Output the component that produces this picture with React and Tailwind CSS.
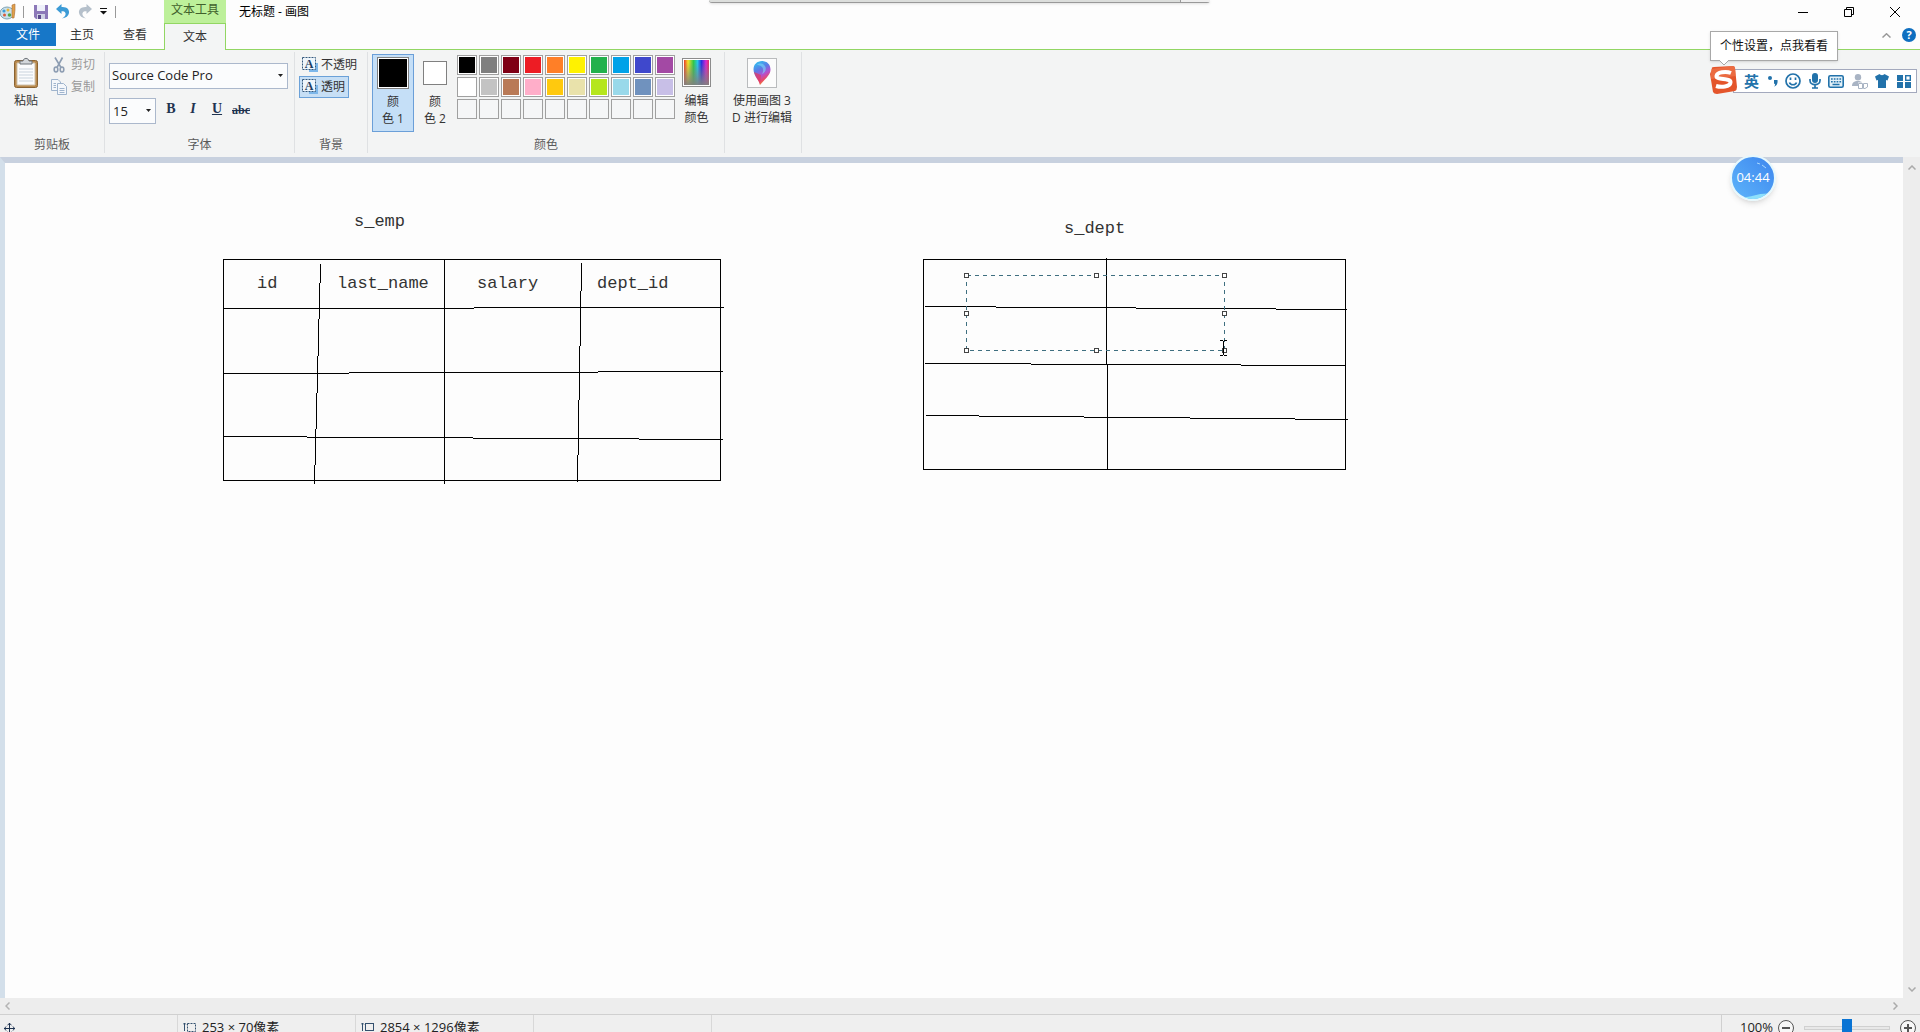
import React from "react";

const PALETTE = [
  ["#000000", "#7f7f7f", "#7f0015", "#ed1c24", "#ff7f27", "#fff200", "#22b14c", "#00a2e8", "#3f48cc", "#a349a4"],
  ["#ffffff", "#c3c3c3", "#b97a57", "#ffaec9", "#ffc90e", "#e9e2ab", "#b5e61d", "#99d9ea", "#7092be", "#c8bfe7"],
  Array(10).fill(""),
];

function Group({ label, className, children }) {
  return (
    <section className={"flex flex-col border-r border-[#dfe1e3] " + className}>
      <div className="flex flex-1 min-h-0">{children}</div>
      <div className="h-4 text-center leading-4 text-[#5a5a5a]">{label}</div>
    </section>
  );
}

function Caret() {
  return (
    <svg className="pointer-events-none absolute right-[5px] top-1/2 -mt-0.5" width="5" height="3">
      <path d="M0 0H5L2.5 3Z" fill="#222" />
    </svg>
  );
}

function PaintIcon() {
  return (
    <svg width="16" height="17" viewBox="0 0 16 17">
      <ellipse cx="7" cy="10" rx="7" ry="6" fill="#c9e0ea" stroke="#7fa3b5" />
      <circle cx="4" cy="8" r="1.6" fill="#3c9bd6" />
      <circle cx="8" cy="7" r="1.5" fill="#e8b33a" />
      <circle cx="4.5" cy="12" r="1.5" fill="#d95b3c" />
      <circle cx="9.5" cy="12" r="1.8" fill="#54a548" />
      <path d="M12 2l3-1v6l-1 8h-2V7z" fill="#e2a04a" stroke="#a9713a" strokeWidth=".6" />
    </svg>
  );
}

function SaveIcon() {
  return (
    <svg width="14" height="14" viewBox="0 0 14 14">
      <path d="M0 0H14V14H2L0 12Z" fill="#8c78b8" />
      <rect x="3" y="0" width="8" height="6" fill="#eef0fa" />
      <rect x="3" y="9" width="8" height="5" fill="#cfd2e4" />
      <rect x="4" y="10" width="3" height="4" fill="#5a4a8c" />
    </svg>
  );
}

function UndoIcon({ color, flip }) {
  return (
    <svg width="14" height="15" viewBox="0 0 14 15" className={flip ? "-scale-x-100" : ""}>
      <path d="M0 5L5.5 0V3C11 2.500 13.500 5.500 13 9C12.500 12 10 14 6 14.500C9.500 12.500 10.500 10 9 8.200C8.200 7.200 7 7 5.500 7.200V10Z" fill={color} />
    </svg>
  );
}

function ClipboardIcon() {
  return (
    <svg width="26" height="32" viewBox="0 0 26 32">
      <rect x="1.500" y="3.500" width="23" height="27" rx="2" fill="#b98a4e" stroke="#8a6332" />
      <path d="M4 6H22V28H4Z" fill="#fbfcfd" stroke="#cfc3ae" />
      <path d="M6 12H20M6 15H20M6 18H20M6 21H20M6 24H20" stroke="#c9d3dd" />
      <path d="M7 7V4H10C10.500 .5 15.500 .5 16 4H19V7Z" fill="#d3d7db" stroke="#6f757b" />
    </svg>
  );
}

function ScissorsIcon() {
  return (
    <svg width="12" height="16" viewBox="0 0 12 16" fill="none" stroke="#8d9db2" strokeWidth="1.6">
      <path d="M2 0.500L8 10.500M9.500 .5L4 10.500" />
      <ellipse cx="3" cy="12.500" rx="1.800" ry="2.500" />
      <ellipse cx="9" cy="12.500" rx="1.800" ry="2.500" />
    </svg>
  );
}

function CopyIcon() {
  return (
    <svg width="16" height="16" viewBox="0 0 16 16" fill="#f4f7fb" stroke="#9fb4cd">
      <path d="M.5 .5H7L9.500 3V11.500H.5Z" />
      <path d="M2.500 4.500H5M2.500 6.500H5M2.500 8.500H5" />
      <path d="M6.500 4.500H12.500L15.500 7.500V15.500H6.500Z" />
      <path d="M8.500 9.500H13.500M8.500 11.500H13.500M8.500 13.500H13.500" />
    </svg>
  );
}

function TextBoxIcon() {
  return (
    <svg width="16" height="16" viewBox="0 0 16 16">
      <rect x="7" y="6" width="9" height="9" fill="#7db7ea" />
      <rect x=".5" y=".5" width="13" height="12" fill="#eef5fb" stroke="#34587c" strokeDasharray="2 1" />
      <text x="7" y="11" textAnchor="middle" fontSize="12" fontWeight="bold" fontFamily="Liberation Serif, serif" fill="#1f3d63">A</text>
    </svg>
  );
}

function RainbowIcon() {
  return (
    <svg width="29" height="29" viewBox="0 0 29 29">
      <defs>
        <linearGradient id="hues">
          <stop offset="0" stopColor="#e8382c" />
          <stop offset=".16" stopColor="#f6e02a" />
          <stop offset=".38" stopColor="#2fc84a" />
          <stop offset=".54" stopColor="#25c6e8" />
          <stop offset=".7" stopColor="#2a2ee0" />
          <stop offset=".88" stopColor="#d928d4" />
          <stop offset="1" stopColor="#e0305e" />
        </linearGradient>
        <linearGradient id="fade" x2="0" y2="1">
          <stop offset=".1" stopColor="#808080" stopOpacity="0" />
          <stop offset="1" stopColor="#808080" stopOpacity=".95" />
        </linearGradient>
      </defs>
      <rect x=".5" y=".5" width="28" height="28" fill="#fff" stroke="#8c8c8c" />
      <rect x="2" y="2" width="25" height="25" fill="url(#hues)" />
      <rect x="2" y="2" width="25" height="25" fill="url(#fade)" />
    </svg>
  );
}

function Paint3DIcon() {
  return (
    <svg width="30" height="30" viewBox="0 0 30 30">
      <defs>
        <linearGradient id="drop" x1=".2" y1="0" x2=".6" y2="1">
          <stop offset="0" stopColor="#2fc3f0" />
          <stop offset=".35" stopColor="#5a7be6" />
          <stop offset=".6" stopColor="#b44fd0" />
          <stop offset=".8" stopColor="#e8486a" />
          <stop offset="1" stopColor="#f5a623" />
        </linearGradient>
      </defs>
      <rect x=".5" y=".5" width="29" height="29" fill="#fcfcfc" stroke="#b9bbbd" />
      <path d="M15 3C20 3 23.500 6.500 23.500 11.500C23.500 17 18 21 13 27C13 23 6.500 18 6.500 11.500C6.500 6.500 10 3 15 3Z" fill="url(#drop)" />
      <path d="M10 7C12 5 16 5 18 8C20 11 18 15 15 16C18 11 15 7 10 7Z" fill="#7fe0fa" opacity=".55" />
      <path d="M7 14L14 17L13 27C12 22 8 19 7 14Z" fill="#e23a5c" opacity=".7" />
    </svg>
  );
}

function SogouLogo() {
  return (
    <svg width="29" height="28" viewBox="0 0 29 28">
      <path d="M3 3Q2 1 5 1L24 0Q26 0 26 2L28 21Q28 24 26 25L8 28Q5 28 4 26L1 8Z" fill="#e4552b" />
      <path d="M2 3L24 0L26 2L27 10L2 13Z" fill="#f07a50" opacity=".6" />
      <path d="M22 7C17 5 8 6 7.500 10C7 14.500 22 11.500 21.500 16.500C21 21 12 21.500 7 20" fill="none" stroke="#fff" strokeWidth="4" />
    </svg>
  );
}

function ImeBar() {
  const btn = "flex h-full items-center justify-center";
  return (
    <div className="absolute right-[3px] top-[69px] flex h-6 w-[184px] items-center justify-between border border-[#a3a9bd] bg-white pl-[10px] pr-[5px] text-[#2272aa]">
      <button aria-label="中英文切换" className={btn + " text-[15px] font-bold"}>英</button>
      <button aria-label="标点" className={btn}>
        <svg width="11" height="12" viewBox="0 0 11 12"><circle cx="3" cy="3" r="2" fill="currentColor" /><path d="M7 5h3.500C11 8.500 9.500 11 7 11.500C8.500 10 8.500 9 7 8.500Z" fill="currentColor" /></svg>
      </button>
      <button aria-label="表情" className={btn}>
        <svg width="16" height="16" viewBox="0 0 16 16" fill="none" stroke="currentColor" strokeWidth="1.700"><circle cx="8" cy="8" r="7" /><path d="M5.500 4.500V7M10.500 4.500V7M4.500 9.500C5.500 12.500 10.500 12.500 11.500 9.500" /></svg>
      </button>
      <button aria-label="语音" className={btn}>
        <svg width="12" height="16" viewBox="0 0 12 16"><rect x="3" y="0" width="6" height="10" rx="3" fill="currentColor" /><path d="M1 6V7.500C1 13 11 13 11 7.500V6M6 12V15M3 15H9" fill="none" stroke="currentColor" strokeWidth="1.700" /></svg>
      </button>
      <button aria-label="软键盘" className={btn}>
        <svg width="16" height="13" viewBox="0 0 16 13"><rect x=".8" y=".8" width="14.400" height="11.400" rx="1.500" fill="#e4f1f8" stroke="currentColor" strokeWidth="1.600" /><path d="M3 4H13.500M3 6.700H13.500" stroke="currentColor" strokeWidth="1.600" strokeDasharray="1.700 1.100" /><path d="M4.500 9.500H11.500" stroke="currentColor" strokeWidth="1.500" /></svg>
      </button>
      <button aria-label="账户" className={btn}>
        <svg width="16" height="15" viewBox="0 0 16 15" fill="#a9b4c4"><circle cx="6" cy="3.300" r="3.200" /><path d="M0 12C0 8.500 2 7 6 7C8 7 9.500 7.500 10 8.500H6V12Z" /><path d="M6.500 9.500H10.500V14.500H6.500ZM11.500 9.500H15.500V13L13 14.500H11.500Z" fill="#fff" stroke="#a9b4c4" /></svg>
      </button>
      <button aria-label="皮肤" className={btn}>
        <svg width="14" height="14" viewBox="0 0 14 14"><path d="M4.500 0C5.500 1.500 8.500 1.500 9.500 0L14 2.500L12.500 6.500L11 6V14H3V6L1.500 6.500L0 2.500Z" fill="currentColor" /></svg>
      </button>
      <button aria-label="工具箱" className={btn}>
        <svg width="14" height="13" viewBox="0 0 14 13" fill="currentColor"><rect width="6" height="6" /><rect x="8.700" y=".7" width="4.600" height="4.600" fill="#fff" stroke="currentColor" strokeWidth="1.400" /><rect y="7" width="6" height="6" /><rect x="8" y="7" width="6" height="6" /></svg>
      </button>
    </div>
  );
}

function Drawing() {
  const handles = [
    [966, 275], [1096, 275], [1224, 275],
    [966, 313], [1224, 313],
    [966, 350], [1096, 350], [1224, 350],
  ];
  return (
    <svg className="block h-full w-full" role="img" aria-label="画布">
      <g transform="translate(-5 -163)" fill="none" stroke="#000" shapeRendering="crispEdges">
        <rect x="223.500" y="259.500" width="497" height="221" />
        <path d="M320.500 264V283M319.500 283V319M318.500 319V356M317.500 356V393M316.500 393V429M315.500 429V465M314.500 465V484" />
        <path d="M444.500 260V484" />
        <path d="M581.500 263V291M580.500 291V346M579.500 346V400M578.500 400V455M577.500 455V482" />
        <path d="M223 308.500H474M474 307.500H724" />
        <path d="M223 373.500H349M349 372.500H598M598 371.500H723" />
        <path d="M223 436.500H307M307 437.500H473M473 438.500H639M639 439.500H723" />
        <rect x="923.500" y="259.500" width="422" height="210" />
        <path d="M1106.500 258V365M1107.500 365V469" />
        <path d="M925 306.500H996M996 307.500H1136M1136 308.500H1276M1276 309.500H1347" />
        <path d="M925 363.500H1031M1031 364.500H1241M1241 365.500H1345" />
        <path d="M926 415.500H979M979 416.500H1084M1084 417.500H1190M1190 418.500H1295M1295 419.500H1348" />
        <rect x="966.500" y="275.500" width="258" height="75" stroke="#fdfdfd" />
        <rect x="966.500" y="275.500" width="258" height="75" stroke="#3f6f80" strokeDasharray="4 4" />
        {handles.map(([x, y]) => (
          <rect key={x + "-" + y} x={x - 1.5} y={y - 1.5} width="4" height="4" fill="#fff" stroke="#444" />
        ))}
        <path d="M1220 340.500H1223M1224 340.500H1227M1223.500 341V355M1220 355.500H1223M1224 355.500H1227" />
      </g>
      <g transform="translate(-5 -163)" fontFamily="Liberation Mono, monospace" fontSize="17" fill="#333">
        <text x="354" y="226">s_emp</text>
        <text x="257" y="288">id</text>
        <text x="337" y="288">last_name</text>
        <text x="477" y="288">salary</text>
        <text x="597" y="288">dept_id</text>
        <text x="1064" y="233">s_dept</text>
      </g>
    </svg>
  );
}

export default function App() {
  return (
    <div className="relative flex h-screen flex-col overflow-hidden bg-[#fdfdfd] font-['Open_Sans','Noto_Sans_CJK_SC',sans-serif] text-xs text-[#333]">
      <header className="flex h-[23px] items-center">
        <div className="flex w-[164px] items-center">
          <PaintIcon />
          <span className="ml-[7px] h-3 w-px bg-[#999]" />
          <button aria-label="保存" className="ml-[10px]"><SaveIcon /></button>
          <button aria-label="撤消" className="ml-2"><UndoIcon color="#3c9bd6" /></button>
          <button aria-label="重做" className="ml-2"><UndoIcon color="#b5c0cb" flip /></button>
          <button aria-label="自定义快速访问工具栏" className="ml-2">
            <svg width="7" height="7" className="block"><path d="M0 .5H7" stroke="#111" /><path d="M0 3H7L3.500 6.500Z" fill="#111" /></svg>
          </button>
          <span className="ml-2 h-3 w-px bg-[#999]" />
        </div>
        <div className="h-full w-[62px] bg-[#bdf09a] text-center leading-5 text-[#41602c]">文本工具</div>
        <h1 className="ml-[13px] flex-1 text-black">无标题 - 画图</h1>
        <div className="mr-5 flex items-center gap-9">
          <button aria-label="最小化"><svg width="10" height="10"><path d="M0 5.500H10" stroke="#000" /></svg></button>
          <button aria-label="还原"><svg width="10" height="10" fill="none" stroke="#000"><path d="M.5 2.500H7.500V9.500H.5ZM2.500 2.500V.5H9.500V7.500H7.500" /></svg></button>
          <button aria-label="关闭"><svg width="10" height="10" stroke="#000"><path d="M0 0L10 10M10 0L0 10" /></svg></button>
        </div>
      </header>

      <nav className="flex h-[27px]">
        <div className="flex w-[164px] border-b border-[#92d663]">
          <button className="h-[23px] w-14 bg-[#1777c8] text-white">文件</button>
          <button className="h-6 w-[52px]">主页</button>
          <button className="h-6 w-[54px]">查看</button>
        </div>
        <button className="w-[62px] border-x border-t border-[#92d663] bg-[#f3f5f5]">文本</button>
        <div className="flex flex-1 items-center justify-end gap-[11px] border-b border-[#92d663] pr-1 pb-0.5">
          <button aria-label="折叠功能区"><svg width="9" height="5" className="block" fill="none" stroke="#999" strokeWidth="1.500"><path d="M.5 4.500L4.500 .8L8.500 4.500" /></svg></button>
          <button aria-label="帮助" className="h-[14px] w-[14px] rounded-full bg-[#0f6fc0] text-[11px] font-bold leading-[14px] text-white">?</button>
        </div>
      </nav>

      <div className="flex h-[107px] bg-[#f3f4f4] pt-0.5 pb-1">
        <Group label="剪贴板" className="w-[105px]">
          <button className="mt-[5px] ml-[13px] flex w-[26px] flex-col items-center gap-1 self-start whitespace-nowrap">
            <ClipboardIcon />
            <span>粘贴</span>
          </button>
          <div className="ml-3 flex flex-col gap-[6px] pt-[5px] text-[#999]">
            <button className="flex h-4 items-center gap-1"><span className="flex w-4 justify-center"><ScissorsIcon /></span>剪切</button>
            <button className="flex h-4 items-center gap-1"><CopyIcon />复制</button>
          </div>
        </Group>
        <Group label="字体" className="w-[190px]">
          <div className="flex flex-1 flex-col gap-[9px] pl-1 pr-[6px] pt-[11px]">
            <div className="relative">
              <select aria-label="字体系列" className="block h-[26px] w-full appearance-none border border-[#abb8cc] bg-[#fbfcfd] px-[2px] text-[13px] text-[#222]"><option>Source Code Pro</option></select>
              <Caret />
            </div>
            <div className="flex items-center font-['Liberation_Serif'] text-sm font-bold text-[#1f3350]">
              <div className="relative mr-2 w-[47px] font-['Open_Sans'] font-normal">
                <select aria-label="字体大小" className="block h-[26px] w-full appearance-none border border-[#abb8cc] bg-[#fbfcfd] px-[3px] text-[13px] text-[#222]"><option>15</option></select>
                <Caret />
              </div>
              <button aria-label="加粗" className="h-[26px] w-[14px] pb-1">B</button>
              <button aria-label="倾斜" className="ml-2 h-[26px] w-[14px] pb-1 italic">I</button>
              <button aria-label="下划线" className="ml-[10px] h-[26px] w-[14px] pb-1 underline">U</button>
              <button aria-label="删除线" className="ml-2 h-[26px] w-[18px] pb-0.5 text-xs line-through">abc</button>
            </div>
          </div>
        </Group>
        <Group label="背景" className="w-[73px]">
          <div className="flex flex-col items-start pl-1 pt-0.5 whitespace-nowrap">
            <button className="flex h-[22px] items-center gap-[3px] px-[3px]"><TextBoxIcon />不透明</button>
            <button className="flex h-[22px] items-center gap-[3px] border border-[#6ba1d8] bg-[#c7dff5] px-0.5 pr-[3px]"><TextBoxIcon />透明</button>
          </div>
        </Group>
        <Group label="颜色" className="w-[357px]">
          <button className="ml-1 mt-0.5 flex h-[78px] w-[42px] flex-col items-center border border-[#6b9fd8] bg-[#c5dff7] pt-0.5 leading-[17px]">
            <span className="mb-1 h-8 w-8 border-2 border-[#808080] bg-black outline -outline-offset-2 outline-white" />
            <span>颜</span><span>色 1</span>
          </button>
          <button className="mt-0.5 flex h-[78px] w-[42px] flex-col items-center pt-[7px] leading-[17px]">
            <span className="mb-2 h-6 w-6 border border-[#808080] bg-white" />
            <span>颜</span><span>色 2</span>
          </button>
          <div className="ml-px mt-[3px] grid grid-cols-10 content-start gap-0.5">
            {PALETTE.flat().map((c, i) => (
              <button
                key={i}
                aria-label={c ? "颜色 " + c : "空颜色"}
                className={"h-5 w-5 border border-[#a0a0a0] " + (c ? "bg-white p-px" : "bg-[#f5f6f7]")}
              >
                {c && <span className="block h-full w-full" style={{ backgroundColor: c }} />}
              </button>
            ))}
          </div>
          <button className="ml-[7px] mt-[6px] flex w-[29px] flex-col items-center self-start leading-[17px]">
            <span className="mb-[5px] block h-[29px]"><RainbowIcon /></span>
            <span>编辑</span><span>颜色</span>
          </button>
        </Group>
        <Group label="" className="w-[77px]">
          <button className="mt-[6px] flex w-[74px] flex-col items-center self-start whitespace-nowrap leading-[17px]">
            <span className="mb-1 block h-[30px]"><Paint3DIcon /></span>
            <span>使用画图 3</span><span>D 进行编辑</span>
          </button>
        </Group>
      </div>

      <main className="flex min-h-0 flex-1 bg-[#ededed]">
        <div className="flex flex-1 flex-col">
          <div className="flex-1 border-l-[5px] border-t-[6px] border-l-[#d3dfea] border-t-[#c8d1df] bg-[#fdfdfd]">
            <Drawing />
          </div>
          <div className="flex h-4 items-center justify-between px-[5px]">
            <svg width="5" height="8" fill="none" stroke="#b4b4b4" strokeWidth="1.500"><path d="M4.500 .5L1 4L4.500 7.500" /></svg>
            <svg width="5" height="8" fill="none" stroke="#aaa" strokeWidth="1.500"><path d="M.5 .5L4 4L.5 7.500" /></svg>
          </div>
        </div>
        <div className="flex w-[17px] flex-col items-center justify-between pb-[22px] pt-2">
          <svg width="8" height="5" fill="none" stroke="#aaa" strokeWidth="1.500"><path d="M.5 4.500L4 1L7.500 4.500" /></svg>
          <svg width="8" height="5" fill="none" stroke="#aaa" strokeWidth="1.500"><path d="M.5 .5L4 4L7.500 .5" /></svg>
        </div>
      </main>

      <footer className="h-[18px] overflow-hidden border-t border-[#d0d0d0] bg-[#efefef] text-[13px] text-[#222]">
        <div className="flex h-[26px]">
          <div className="flex w-[178px] items-center border-r border-[#d8d8d8] pl-1">
            <svg width="11" height="11" fill="none" stroke="#1f3350"><path d="M0 5.500H11M5.500 0V11M3.500 2L5.500 .5L7.500 2M3.500 9L5.500 10.500L7.500 9M2 3.500L.5 5.500L2 7.500M9 3.500L10.500 5.500L9 7.500" /></svg>
          </div>
          <div className="flex w-[178px] items-center gap-[6px] border-r border-[#d8d8d8] pl-[5px]">
            <svg width="13" height="13" fill="none" stroke="#33506e"><path d="M1.500 1V9M0 2.500L1.500 1L3 2.500" /><rect x="4.500" y="1.500" width="8" height="8" strokeDasharray="2 1" /></svg>
            253 × 70像素
          </div>
          <div className="flex w-[178px] items-center gap-[6px] border-r border-[#d8d8d8] pl-[5px]">
            <svg width="13" height="13" fill="none" stroke="#33506e"><path d="M1.500 1V9M0 2.500L1.500 1L3 2.500" /><rect x="4.500" y="1.500" width="8" height="7" /></svg>
            2854 × 1296像素
          </div>
          <div className="w-[178px] border-r border-[#d8d8d8]" />
          <div className="flex-1" />
          <div className="flex w-[199px] items-center border-l border-[#d0d0d0] pl-[18px]">
            <label htmlFor="zoom" className="w-8">100%</label>
            <button aria-label="缩小" className="ml-[6px]"><svg width="16" height="16" className="block" fill="#f8f8f8" stroke="#555"><circle cx="8" cy="8" r="7.500" /><path d="M4 8H12" strokeWidth="2" /></svg></button>
            <input
              id="zoom"
              type="range"
              defaultValue="50"
              className="mx-[10px] h-4 min-w-0 flex-1 appearance-none bg-transparent [&::-webkit-slider-runnable-track]:h-1 [&::-webkit-slider-runnable-track]:border [&::-webkit-slider-runnable-track]:border-[#d0d0d0] [&::-webkit-slider-runnable-track]:bg-[#e8e8e8] [&::-webkit-slider-thumb]:-mt-2 [&::-webkit-slider-thumb]:h-[18px] [&::-webkit-slider-thumb]:w-[10px] [&::-webkit-slider-thumb]:appearance-none [&::-webkit-slider-thumb]:bg-[#0a74d4]"
            />
            <button aria-label="放大" className="mr-1"><svg width="16" height="16" className="block" fill="#f8f8f8" stroke="#555"><circle cx="8" cy="8" r="7.500" /><path d="M4 8H12M8 4V12" strokeWidth="2" /></svg></button>
          </div>
        </div>
      </footer>

      <div className="absolute left-[709px] top-0 flex h-[3px] w-[501px] justify-end rounded-b border-b border-[#999] bg-[#dcdedc] shadow">
        <span className="h-0.5 w-[30px] border-l border-[#999] bg-[#eee]" />
      </div>

      <ImeBar />
      <div className="absolute right-[182px] top-[66px]"><SogouLogo /></div>
      <div className="absolute right-[82px] top-[31px] h-[30px] w-32 border border-[#a8a8a8] bg-white text-center leading-7 text-[#111] shadow">
        个性设置，点我看看
        <svg className="absolute left-2 top-7" width="10" height="6"><path d="M0 0L5 5L10 0" fill="#fff" stroke="#a8a8a8" /></svg>
      </div>
      <div className="absolute right-36 top-[155px] flex h-[46px] w-[46px] items-center justify-center overflow-hidden rounded-full border-2 border-[#e6f8fd] bg-linear-to-tr from-[#5db4fa] to-[#3f86ee] font-['Open_Sans'] text-[13px] text-white shadow-md">
        <svg className="absolute inset-0" width="42" height="42"><path d="M4 39C15 44 25 34 42 37V42H4Z" fill="#8de0fb" /><path d="M25 6L28 7M30 8L34 11" stroke="#a9d8ff" /></svg>
        <span className="relative">04:44</span>
      </div>
    </div>
  );
}
